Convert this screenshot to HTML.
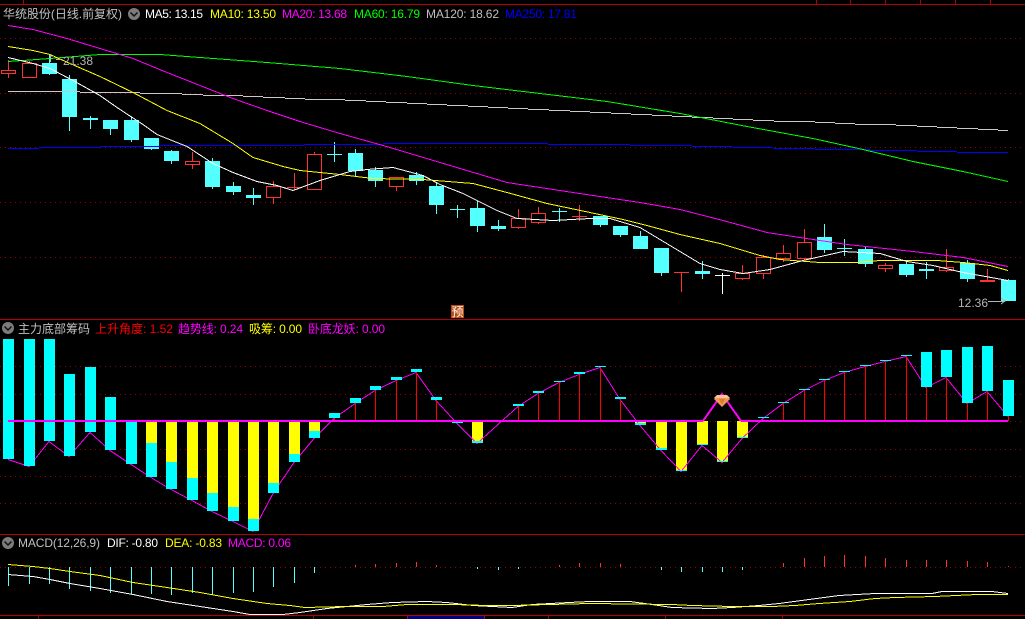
<!DOCTYPE html>
<html><head><meta charset="utf-8"><style>
html,body{margin:0;padding:0;background:#000;width:1025px;height:619px;overflow:hidden}
svg{display:block}
text{font-family:"Liberation Sans","Noto Sans CJK SC",sans-serif;font-size:12px}
.c{shape-rendering:crispEdges;fill:none}
</style></head><body>
<svg width="1025" height="619" viewBox="0 0 1025 619" xmlns="http://www.w3.org/2000/svg">
<rect width="1025" height="619" fill="#000"/>
<!-- grids -->
<g class="c" stroke="#960000" stroke-dasharray="1 4">
<path d="M0 38.5H1025M0 93.5H1025M0 147.5H1025M0 202.5H1025M0 257.5H1025"/>
<path d="M0 366.5H1025M0 394.5H1025M0 421.5H1025M0 449.5H1025M0 476.5H1025M0 503.5H1025"/>
<path d="M0 567.5H1025"/>
</g>
<!-- frames -->
<g class="c" stroke="#b40000">
<path d="M0 4.5H1025M0 319.5H1025M0 534.5H1025M0 615.5H1025"/>
<path d="M23.5 0V4M816.5 0V4M850.5 0V4M885.5 0V4M920.5 0V4M955.5 0V4M990.5 0V4"/>
<path d="M38.5 615V619M313.5 615V619M548.5 615V619M665.5 615V619M782.5 615V619"/>
</g>
<!-- candles -->
<path class="c" stroke="#54ffff" d="M49.5 55V75M69.5 75V131M90.5 116V129M110.5 120V135M131.5 117V142M151.5 138V150M171.5 150V164M212.5 158V189M233.5 182V195M253.5 188V205M334.5 142V162M355.5 149V177M375.5 167V187M416.5 172V185M436.5 183V214M457.5 205V218M477.5 201V232M498.5 220V231M559.5 208V222M600.5 216V227M620.5 226V237M640.5 231V249M661.5 248V276M702.5 261V279M824.5 224V253M844.5 239V256M865.5 247V267M906.5 260V277M926.5 262V279M967.5 260V282M1008.5 279V301"/>
<path shape-rendering="crispEdges" fill="#54ffff" d="M42 63H57V74H42zM62 79H77V117H62zM83 118H98V120H83zM103 120H118V129H103zM124 120H139V140H124zM144 138H159V149H144zM164 151H179V161H164zM205 161H220V187H205zM226 186H241V192H226zM246 195H261V198H246zM327 154H342V155H327zM348 153H363V171H348zM368 170H383V181H368zM409 175H424V181H409zM429 186H444V205H429zM450 209H465V210H450zM470 208H485V226H470zM491 226H506V229H491zM552 211H567V212H552zM593 216H608V225H593zM613 226H628V235H613zM633 236H648V249H633zM654 248H669V273H654zM695 271H710V274H695zM817 237H832V250H817zM837 248H852V249H837zM858 249H873V264H858zM899 264H914V275H899zM919 269H934V271H919zM960 263H975V279H960zM1001 280H1016V301H1001z"/>
<path class="c" stroke="#ff3232" d="M1.5 70.5H15.5V73.5H1.5zM8.5 60V70M8.5 73V78M22.5 63.5H36.5V77.5H22.5zM29.5 61V63M29.5 77V78M185.5 161.5H199.5V164.5H185.5zM192.5 152V161M192.5 164V169M266.5 186.5H280.5V197.5H266.5zM273.5 181V186M273.5 197V204M287 187.5H302M294.5 173V190M307.5 154.5H321.5V189.5H307.5zM314.5 152V154M389.5 177.5H403.5V186.5H389.5zM396.5 186V191M511.5 218.5H525.5V227.5H511.5zM518.5 209V218M518.5 227V229M531.5 213.5H545.5V222.5H531.5zM538.5 207V213M538.5 222V224M572 216.5H587M579.5 205V221M674 272.5H689M681.5 272V292M735.5 273.5H749.5V278.5H735.5zM742.5 265V273M742.5 278V280M756.5 257.5H770.5V273.5H756.5zM763.5 255V257M763.5 273V279M776.5 253.5H790.5V258.5H776.5zM783.5 245V253M783.5 258V262M797.5 242.5H811.5V258.5H797.5zM804.5 229V242M804.5 258V260M878.5 265.5H892.5V268.5H878.5zM885.5 263V265M885.5 268V272M939.5 267.5H953.5V270.5H939.5zM946.5 249V267M946.5 270V272M987.5 269V280"/>
<path shape-rendering="crispEdges" fill="#ff3232" d="M980 280H995V282H980z"/>
<path class="c" stroke="#fff" d="M715 275.5H730M722.5 273V294"/>
<!-- MA lines -->
<g class="c">
<path stroke="#0000ff" d="M8 148.5H39M39 147.5H100M100 146.5H160M160 145.5H304M304 144.5H383M383 143.5H548M548 144.5H630M630 145.5H692M692 146.5H733M733 147.5H773M773 148.5H815M815 149.5H870M870 150.5H917M917 151.5H957M957 152.5H1008"/>
<path stroke="#c8c8c8" d="M8 91.5H80M80 92.5H140M140 93.5H182M182 94.5H203M203 95.5H243M243 96.5H263M263 97.5H285M285 98.5H305M305 99.5H345M345 100.5H366M366 101.5H386M386 102.5H407M407 103.5H427M427 104.5H447M447 105.5H468M468 106.5H488M488 107.5H508M508 108.5H528M528 109.5H549M549 110.5H570M570 111.5H590M590 112.5H611M611 113.5H631M631 114.5H652M652 115.5H672M672 116.5H692M692 117.5H713M713 118.5H733M733 119.5H753M753 120.5H774M774 121.5H815M815 122.5H835M835 123.5H855M855 124.5H896M896 125.5H917M917 126.5H937M937 127.5H957M957 128.5H978M978 129.5H998M998 130.5H1008"/>
<g transform="translate(0,.5)">
<polyline stroke="#00ff00" points="8,61 23,60 63,57 100,54 160,54 200,57 267,62 340,68 407,76 473,85 540,93 607,101 680,113 747,126 813,138 863,149 913,161 963,171 1008,181"/>
<polyline stroke="#ff00ff" points="8,25 33,29 67,38 100,48 133,58 167,72 200,85 233,98 267,110 300,121 340,133 383,145 400,150 440,162 507,182 573,192 640,202 680,209 723,220 767,232 813,239 847,244 913,251 963,257 1008,266"/>
<polyline stroke="#ffff00" points="8,46 33,50 50,54 70,63 100,76 133,92 167,110 200,123 233,143 253,157 283,166 300,170 340,174 373,178 423,179 473,183 507,192 547,203 590,212 623,219 647,225 680,234 720,243 760,255 780,259 820,262 857,262 880,260 937,260 963,262 990,265 1008,270"/>
<polyline stroke="#ffffff" points="8,57 33,63 50,68 73,80 100,95 117,107 143,124 157,134 187,146 213,163 233,172 257,181 277,185 293,190 320,180 340,174 350,171 367,169 393,167 423,175 440,184 463,193 497,210 517,218 553,220 590,218 610,218 640,227 660,239 680,251 700,263 720,269 743,273 770,269 803,260 843,251 880,253 907,261 933,265 963,272 1008,280"/>
</g>
</g>
<!-- price labels -->
<path class="c" stroke="#b4b4b4" d="M50.5 55V62M50 56H54M56 59.5H60"/>
<text x="63" y="65" fill="#b4b4b4" textLength="30">21.38</text>
<text x="958" y="307" fill="#b4b4b4" textLength="30">12.36</text>
<path class="c" stroke="#b4b4b4" d="M988 301.5H1005M1001 298L1005 301L1001 304"/>
<rect x="451" y="305" width="13" height="13" fill="#b84a10"/>
<text x="451.5" y="316" fill="#fff" style="font-size:12px">预</text>
<!-- main header -->
<text x="3" y="18" fill="#c0c0c0" textLength="119">华统股份(日线.前复权)</text>
<g transform="translate(134,14)"><circle r="6" fill="#7c7c7c"/><path d="M-3.5 -1.5L0 2L3.5 -1.5" fill="none" stroke="#111" stroke-width="1.5"/></g>
<text x="145" y="18" fill="#fff" textLength="58">MA5: 13.15</text>
<text x="210" y="18" fill="#ff0" textLength="66">MA10: 13.50</text>
<text x="282" y="18" fill="#f0f" textLength="65">MA20: 13.68</text>
<text x="354" y="18" fill="#0f0" textLength="66">MA60: 16.79</text>
<text x="426" y="18" fill="#c0c0c0" textLength="73">MA120: 18.62</text>
<text x="505" y="18" fill="#00f" textLength="72">MA250: 17.81</text>
<!-- indicator panel -->
<path shape-rendering="crispEdges" fill="#ff0" d="M146 421H157V443H146zM166 421H177V462H166zM187 421H198V478H187zM207 421H218V493H207zM228 421H239V507H228zM248 421H259V519H248zM268 421H279V483H268zM289 421H300V454H289zM309 421H320V431H309zM472 421H483V441H472zM635 421H646V423H635zM656 421H667V448H656zM676 421H687V470H676zM697 421H708V444H697zM717 421H728V461H717zM737 421H748V437H737z"/>
<polyline class="c" transform="translate(0,.5)" stroke="#ff00ff" points="8,459 29,466 49,441 69,456 90,432 110,450 131,464 151,477 171,489 192,500 212,511 233,521 253,531 273,493 294,462 314,438 334,418 355,403 375,390 396,380 416,372 436,400 457,423 477,443 498,424 518,406 538,393 559,382 579,374 600,367 620,399 640,425 661,450 681,471 702,445 722,462 742,438 763,418 783,403 804,390 824,380 844,372 865,366 885,361 906,356 926,387 946,377 967,403 987,391 1008,416"/>
<path class="c" stroke="#ff0000" d="M334.5 418V421M355.5 403V421M375.5 390V421M396.5 380V421M416.5 372V421M436.5 400V421M518.5 406V421M538.5 393V421M559.5 382V421M579.5 374V421M600.5 367V421M620.5 399V421M783.5 403V421M804.5 390V421M824.5 380V421M844.5 372V421M865.5 366V421M885.5 361V421M906.5 356V421M926.5 387V421M946.5 377V421M967.5 403V421M987.5 391V421M1008.5 416V421"/>
<path shape-rendering="crispEdges" fill="#00ffff" d="M3 339H14V459H3zM24 339H35V466H24zM44 339H55V441H44zM64 374H75V456H64zM85 367H96V432H85zM105 397H116V450H105zM126 421H137V464H126zM146 443H157V477H146zM166 462H177V489H166zM187 478H198V500H187zM207 493H218V511H207zM228 507H239V521H228zM248 519H259V531H248zM268 483H279V493H268zM289 454H300V462H289zM309 431H320V438H309zM329 413H340V418H329zM350 398H361V403H350zM370 386H381V390H370zM391 377H402V380H391zM411 369H422V372H411zM431 397H442V400H431zM452 422H463V423H452zM472 441H483V443H472zM513 404H524V406H513zM533 391H544V393H533zM554 381H565V382H554zM574 372H585V374H574zM595 366H606V367H595zM615 397H626V399H615zM635 423H646V425H635zM656 448H667V450H656zM676 470H687V471H676zM697 444H708V445H697zM717 461H728V462H717zM737 437H748V438H737zM758 417H769V418H758zM778 402H789V403H778zM799 389H810V390H799zM819 379H830V380H819zM839 371H850V372H839zM860 365H871V366H860zM880 360H891V361H880zM901 355H912V356H901zM921 352H932V387H921zM941 350H952V377H941zM962 347H973V403H962zM982 346H993V391H982zM1003 380H1014V416H1003z"/>
<path shape-rendering="crispEdges" fill="#ff00ff" d="M8 420H703V422H8zM741 420H1008V422H741z"/>
<path class="c" stroke="#ff00ff" stroke-width="2" d="M703 421L722 394L741 421"/>
<polygon points="717,395 727,395 730,399 722,407 714,399" fill="#ee9a55"/>
<polygon points="717,395 727,395 730,398 714,398" fill="#f6c49c"/>
<polygon points="719,399 725,399 722,405" fill="#e07a2a"/>
<!-- panel 2 header -->
<g transform="translate(8,328)"><circle r="6" fill="#7c7c7c"/><path d="M-3.5 -1.5L0 2L3.5 -1.5" fill="none" stroke="#111" stroke-width="1.5"/></g>
<text x="18" y="333" fill="#c0c0c0" textLength="72">主力底部筹码</text>
<text x="95" y="333" fill="#f00" textLength="78">上升角度: 1.52</text>
<text x="178" y="333" fill="#f0f" textLength="65">趋势线: 0.24</text>
<text x="249" y="333" fill="#ff0" textLength="53">吸筹: 0.00</text>
<text x="308" y="333" fill="#f0f" textLength="77">卧底龙妖: 0.00</text>
<!-- MACD -->
<path class="c" stroke="#54ffff" d="M8.5 567V586M29.5 567V584M49.5 567V584M69.5 567V589M90.5 567V591M110.5 567V593M131.5 567V594M151.5 567V594M171.5 567V595M192.5 567V593M212.5 567V595M233.5 567V593M253.5 567V592M273.5 567V587M294.5 567V583M314.5 567V573M477.5 567V569M498.5 567V570M518.5 567V569M661.5 567V570M681.5 567V572M702.5 567V572M722.5 567V572M742.5 567V570"/>
<path class="c" stroke="#ff3232" d="M355.5 565V567M375.5 564V567M396.5 563V567M416.5 562V567M436.5 565V567M559.5 565V567M579.5 563V567M600.5 563V567M620.5 564V567M783.5 563V567M804.5 558V567M824.5 556V567M844.5 555V567M865.5 556V567M885.5 558V567M906.5 560V567M926.5 560V567M946.5 560V567M967.5 561V567M987.5 562V567M1008.5 566V567"/>
<g class="c" transform="translate(0,.5)">
<polyline stroke="#ffffff" points="8,574 33,576 50,579 70,583 100,588 133,594 167,601 200,606 233,611 250,614 283,614 300,612 327,608 347,606 367,604 392,602 427,601 447,602 473,605 512,607 532,604 569,602 590,601 630,601 652,604 672,607 712,608 732,607 759,605 779,603 809,599 839,595 875,593 932,593 942,591 992,591 1008,593"/>
<polyline stroke="#ffff00" points="8,564 33,566 50,568 70,571 100,575 133,582 167,587 200,592 233,598 267,603 290,605 305,607 345,606 383,606 407,604 453,604 487,605 512,605 549,604 590,603 672,604 692,605 732,606 772,606 795,605 819,603 850,601 875,598 895,597 935,596 977,594 1008,594"/>
</g>
<g transform="translate(8,543)"><circle r="6" fill="#7c7c7c"/><path d="M-3.5 -1.5L0 2L3.5 -1.5" fill="none" stroke="#111" stroke-width="1.5"/></g>
<text x="18" y="547" fill="#c0c0c0" textLength="82">MACD(12,26,9)</text>
<text x="107" y="547" fill="#fff" textLength="51">DIF: -0.80</text>
<text x="165" y="547" fill="#ff0" textLength="57">DEA: -0.83</text>
<text x="228" y="547" fill="#f0f" textLength="63">MACD: 0.06</text>
<!-- date box -->
<rect x="407.5" y="615.5" width="77" height="6" fill="#000080" stroke="#c00000" shape-rendering="crispEdges"/>
<text x="409" y="627" fill="#fff" textLength="73" style="font-size:11px">2022/07/29/五</text>
</svg>
</body></html>
